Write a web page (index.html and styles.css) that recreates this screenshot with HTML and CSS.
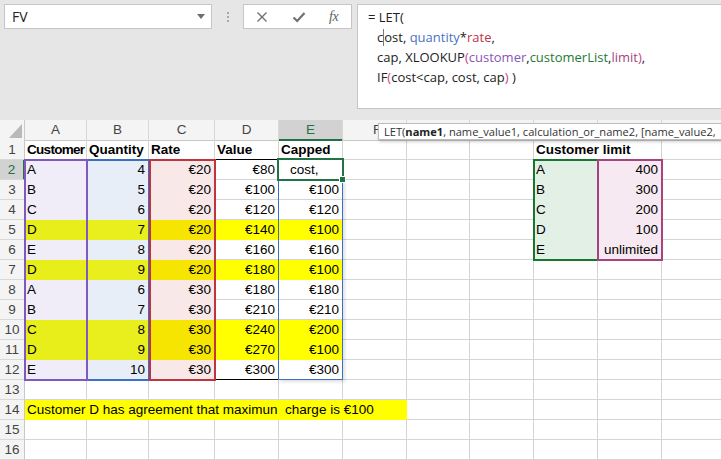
FILE: index.html
```html
<!DOCTYPE html>
<html>
<head>
<meta charset="utf-8">
<link rel="stylesheet" href="styles.css">
</head>
<body>
<div class="topbar">
  <div class="namebox"><span class="nbtext">FV</span><svg class="dd" width="8" height="5" viewBox="0 0 8 5"><polygon points="0,0 8,0 4,5" fill="#6e6e6e"/></svg></div>
  <div class="sep"><i></i><i></i><i></i></div>
  <div class="fbtns">
    <svg width="14" height="14" viewBox="0 0 14 14"><path d="M2.5 2.5 L11.5 11.5 M11.5 2.5 L2.5 11.5" stroke="#707070" stroke-width="1.4" fill="none"/></svg>
    <svg width="14" height="14" viewBox="0 0 14 14"><path d="M1.5 7.5 L5.2 11 L12.5 3" stroke="#707070" stroke-width="2.2" fill="none"/></svg>
    <span class="fx">fx</span>
  </div>
  <div class="fbox">
    <div class="fl">= LET(</div>
    <div class="fl ind">c<span class="caret"></span>ost, <span class="cq">quantity</span>*<span class="cr">rate</span>,</div>
    <div class="fl ind">cap, XLOOKUP<span class="cp">(</span><span class="cc">customer</span>,<span class="cg">customerList</span>,<span class="cl">limit</span><span class="cp">)</span>,</div>
    <div class="fl ind">IF<span class="cp">(</span>cost&lt;cap, cost, cap<span class="cp">)</span> )</div>
  </div>
</div>

<div class="sheet">
  <div class="row">
    <div class="h corner"><svg width="13" height="14" viewBox="0 0 13 14"><polygon points="13,0 13,14 0,14" fill="#b9b9b9"/></svg></div>
    <div class="h">A</div><div class="h">B</div><div class="h">C</div><div class="h">D</div><div class="h sel">E</div><div class="h fcol">F</div><div class="h"></div><div class="h"></div><div class="h"></div><div class="h"></div><div class="h"></div>
  </div>
  <div class="row">
    <div class="rh">1</div>
    <div class="c b tight">Customer</div><div class="c b">Quantity</div><div class="c b">Rate</div><div class="c b">Value</div><div class="c b">Capped</div><div class="c"></div><div class="c"></div><div class="c"></div><div class="c b span2">Customer limit</div><div class="c"></div>
  </div>
  <div class="row">
    <div class="rh rsel">2</div>
    <div class="c fa">A</div><div class="c fb r">4</div><div class="c fc r">€20</div><div class="c r">€80</div><div class="c edit">cost,</div><div class="c"></div><div class="c"></div><div class="c"></div><div class="c fi">A</div><div class="c fj r">400</div><div class="c"></div>
  </div>
  <div class="row">
    <div class="rh">3</div>
    <div class="c fa">B</div><div class="c fb r">5</div><div class="c fc r">€20</div><div class="c r">€100</div><div class="c r">€100</div><div class="c"></div><div class="c"></div><div class="c"></div><div class="c fi">B</div><div class="c fj r">300</div><div class="c"></div>
  </div>
  <div class="row">
    <div class="rh">4</div>
    <div class="c fa">C</div><div class="c fb r">6</div><div class="c fc r">€20</div><div class="c r">€120</div><div class="c r">€120</div><div class="c"></div><div class="c"></div><div class="c"></div><div class="c fi">C</div><div class="c fj r">200</div><div class="c"></div>
  </div>
  <div class="row">
    <div class="rh">5</div>
    <div class="c ya">D</div><div class="c yb r">7</div><div class="c yc r">€20</div><div class="c y r">€140</div><div class="c y r">€100</div><div class="c"></div><div class="c"></div><div class="c"></div><div class="c fi">D</div><div class="c fj r">100</div><div class="c"></div>
  </div>
  <div class="row">
    <div class="rh">6</div>
    <div class="c fa">E</div><div class="c fb r">8</div><div class="c fc r">€20</div><div class="c r">€160</div><div class="c r">€160</div><div class="c"></div><div class="c"></div><div class="c"></div><div class="c fi">E</div><div class="c fj r">unlimited</div><div class="c"></div>
  </div>
  <div class="row">
    <div class="rh">7</div>
    <div class="c ya">D</div><div class="c yb r">9</div><div class="c yc r">€20</div><div class="c y r">€180</div><div class="c y r">€100</div><div class="c"></div><div class="c"></div><div class="c"></div><div class="c"></div><div class="c"></div><div class="c"></div>
  </div>
  <div class="row">
    <div class="rh">8</div>
    <div class="c fa">A</div><div class="c fb r">6</div><div class="c fc r">€30</div><div class="c r">€180</div><div class="c r">€180</div><div class="c"></div><div class="c"></div><div class="c"></div><div class="c"></div><div class="c"></div><div class="c"></div>
  </div>
  <div class="row">
    <div class="rh">9</div>
    <div class="c fa">B</div><div class="c fb r">7</div><div class="c fc r">€30</div><div class="c r">€210</div><div class="c r">€210</div><div class="c"></div><div class="c"></div><div class="c"></div><div class="c"></div><div class="c"></div><div class="c"></div>
  </div>
  <div class="row">
    <div class="rh">10</div>
    <div class="c ya">C</div><div class="c yb r">8</div><div class="c yc r">€30</div><div class="c y r">€240</div><div class="c y r">€200</div><div class="c"></div><div class="c"></div><div class="c"></div><div class="c"></div><div class="c"></div><div class="c"></div>
  </div>
  <div class="row">
    <div class="rh">11</div>
    <div class="c ya">D</div><div class="c yb r">9</div><div class="c yc r">€30</div><div class="c y r">€270</div><div class="c y r">€100</div><div class="c"></div><div class="c"></div><div class="c"></div><div class="c"></div><div class="c"></div><div class="c"></div>
  </div>
  <div class="row">
    <div class="rh">12</div>
    <div class="c fa">E</div><div class="c fb r">10</div><div class="c fc r">€30</div><div class="c r">€300</div><div class="c r">€300</div><div class="c"></div><div class="c"></div><div class="c"></div><div class="c"></div><div class="c"></div><div class="c"></div>
  </div>
  <div class="row">
    <div class="rh">13</div>
    <div class="c"></div><div class="c"></div><div class="c"></div><div class="c"></div><div class="c"></div><div class="c"></div><div class="c"></div><div class="c"></div><div class="c"></div><div class="c"></div><div class="c"></div>
  </div>
  <div class="row">
    <div class="rh">14</div>
    <div class="c y span6">Customer D has agreement that maximun&nbsp; charge is €100</div><div class="c"></div><div class="c"></div><div class="c"></div><div class="c"></div><div class="c"></div>
  </div>
  <div class="row">
    <div class="rh">15</div>
    <div class="c"></div><div class="c"></div><div class="c"></div><div class="c"></div><div class="c"></div><div class="c"></div><div class="c"></div><div class="c"></div><div class="c"></div><div class="c"></div><div class="c"></div>
  </div>
  <div class="row">
    <div class="rh">16</div>
    <div class="c"></div><div class="c"></div><div class="c"></div><div class="c"></div><div class="c"></div><div class="c"></div><div class="c"></div><div class="c"></div><div class="c"></div><div class="c"></div><div class="c"></div>
  </div>

  <!-- range outlines drawn over the cells -->
  <div class="rng rng-d"></div>
  <div class="rng rng-e"></div>
  <div class="rng rng-b"></div>
  <div class="rng rng-a"></div>
  <div class="rng rng-c"></div>
  <div class="rng rng-i"></div>
  <div class="rng rng-j"></div>
  <div class="rng active"></div>

  <div class="tip">LET(<b>name1</b>, name_value1, calculation_or_name2, [name_value2,</div>
</div>
</body>
</html>
```

FILE: styles.css
```css
html, body {
  margin: 0;
  padding: 0;
  width: 721px;
  height: 460px;
  overflow: hidden;
  background: #ffffff;
}

.topbar {
  height: 120px;
  box-sizing: border-box;
  background: #e6e6e6;
  display: flex;
  align-items: flex-start;
  padding: 4px 0 0 4px;
  overflow: hidden;
}

.namebox {
  width: 208px;
  height: 25px;
  box-sizing: border-box;
  border: 1px solid #c6c6c6;
  background: #fff;
  display: flex;
  align-items: center;
  justify-content: space-between;
  padding: 0 6px 0 7px;
  font: 14px "Open Sans", sans-serif;
  color: #222;
}
.nbtext { line-height: 23px; }

.sep {
  width: 31px;
  height: 25px;
  display: flex;
  flex-direction: column;
  align-items: center;
  justify-content: center;
  gap: 2px;
}
.sep i {
  display: block;
  width: 2px;
  height: 2px;
  background: #a8a8a8;
}

.fbtns {
  width: 109px;
  height: 25px;
  box-sizing: border-box;
  border: 1px solid #c6c6c6;
  background: #fff;
  display: flex;
  align-items: center;
  padding-left: 11px;
  gap: 23px;
}
.fx {
  font: italic 14px "Liberation Serif", serif;
  color: #606060;
  width: 14px;
  letter-spacing: -0.5px;
}

.fbox {
  margin-left: 5px;
  flex: 1;
  height: 105px;
  box-sizing: border-box;
  border: 1px solid #c6c6c6;
  border-right: none;
  background: #fff;
  padding: 2px 0 0 10px;
  font: 13px/20px "Open Sans", sans-serif;
  color: #222;
  white-space: nowrap;
}
.fl.ind { padding-left: 9px; }
.caret {
  display: inline-block;
  width: 0;
  height: 17px;
  border-left: 1px solid #777;
  vertical-align: -4px;
}
.cq { color: #4a72c4; }
.cr { color: #c4314b; }
.cc { color: #8a55b8; }
.cg { color: #1f7a33; }
.cl { color: #a8437f; }
.cp { color: #c4458c; }

.sheet {
  --cols: 25px 62px 62px 66px 64px 64px 64px 63px 64px 64px 64px 64px;
  position: relative;
  display: grid;
  grid-template-columns: var(--cols);
  grid-template-rows: repeat(17, 20px);
  font: 13.5px "Liberation Sans", Arial, sans-serif;
}

.row {
  grid-column: 1 / -1;
  display: grid;
  grid-template-columns: var(--cols);
  height: 20px;
}
.row:nth-child(1) { grid-row: 1; }
.row:nth-child(2) { grid-row: 2; }
.row:nth-child(3) { grid-row: 3; }
.row:nth-child(4) { grid-row: 4; }
.row:nth-child(5) { grid-row: 5; }
.row:nth-child(6) { grid-row: 6; }
.row:nth-child(7) { grid-row: 7; }
.row:nth-child(8) { grid-row: 8; }
.row:nth-child(9) { grid-row: 9; }
.row:nth-child(10) { grid-row: 10; }
.row:nth-child(11) { grid-row: 11; }
.row:nth-child(12) { grid-row: 12; }
.row:nth-child(13) { grid-row: 13; }
.row:nth-child(14) { grid-row: 14; }
.row:nth-child(15) { grid-row: 15; }
.row:nth-child(16) { grid-row: 16; }
.row:nth-child(17) { grid-row: 17; }

.h {
  background: #f4f4f4;
  color: #444;
  text-align: center;
  line-height: 19px;
  border-right: 1px solid #d8d8d8;
  border-bottom: 1px solid #c8c8c8;
  box-sizing: border-box;
}
.h.fcol {
  text-align: left;
  padding-left: 30px;
}
.corner {
  display: flex;
  align-items: flex-end;
  justify-content: flex-end;
  padding: 0 2px 2px 0;
  border-right: 1px solid #c8c8c8;
}
.h.sel {
  background: #d2d2d2;
  color: #217346;
  border-bottom: 2px solid #217346;
}

.rh {
  background: #f4f4f4;
  color: #444;
  text-align: center;
  line-height: 19px;
  border-right: 1px solid #c8c8c8;
  border-bottom: 1px solid #d8d8d8;
  box-sizing: border-box;
}
.rh.rsel {
  background: #d2d2d2;
  color: #217346;
  border-right: 2px solid #217346;
}

.c {
  box-sizing: border-box;
  border-right: 1px solid #d4d4d4;
  border-bottom: 1px solid #d4d4d4;
  line-height: 19px;
  padding: 0 3px 0 2px;
  white-space: nowrap;
  overflow: hidden;
  color: #000;
}
.c.r { text-align: right; }
.c.b { font-weight: bold; overflow: visible; }
.c.tight { letter-spacing: -0.7px; padding-right: 0; overflow: hidden; }
.span2 { grid-column: span 2; }
.span6 { grid-column: span 6; }
.c.edit { padding-left: 11px; }

.fa { background: #f0ecf8; border-color: #f0ecf8; }
.fb { background: #e8eef8; border-color: #e8eef8; }
.fc { background: #f9e8e8; border-color: #f9e8e8; }
.fi { background: #e3f0e5; border-color: #e3f0e5; }
.fj { background: #f7e9f1; border-color: #f7e9f1; }
.ya { background: #e8ee1a; border-color: #e8ee1a; }
.yb { background: #e8ef1c; border-color: #e8ef1c; }
.yc { background: #f6e500; border-color: #f6e500; }
.y { background: #ffff00; border-color: #ffff00; }

.rng {
  pointer-events: none;
  box-sizing: border-box;
  margin: -1px;
  border: 2px solid transparent;
}
.rng-a { grid-area: 3 / 2 / 14 / 3; border-color: #7f58c0; }
.rng-b { grid-area: 3 / 3 / 14 / 4; border-color: #3b6fc6; }
.rng-c { grid-area: 3 / 4 / 14 / 5; border-color: #c1333f; margin-left: 0; }
.rng-d {
  grid-area: 3 / 5 / 14 / 6;
  border: none;
  border-top: 1px solid #000;
  border-bottom: 1px solid #000;
  margin: -1px 0 0 0;
}
.rng-e {
  grid-area: 4 / 6 / 14 / 7;
  border: 1px solid #3b6fc6;
  border-top: none;
  margin: 0 0 0 -1px;
  box-shadow: 2px 2px 3px rgba(0, 0, 0, 0.12);
}
.rng-i { grid-area: 3 / 10 / 8 / 11; border-color: #16782e; }
.rng-j { grid-area: 3 / 11 / 8 / 12; border-color: #a8437f; }
.active {
  grid-area: 3 / 6 / 4 / 7;
  border-color: #217346;
  position: relative;
  margin: -2px -1px -1px -2px;
}
.active::after {
  content: "";
  position: absolute;
  right: -4px;
  bottom: -4px;
  width: 5px;
  height: 5px;
  background: #217346;
  border: 1px solid #fff;
}

.tip {
  position: absolute;
  left: 378px;
  top: 3px;
  height: 17px;
  box-sizing: border-box;
  padding: 0 5px;
  background: #fff;
  border: 1px solid #bdbdbd;
  border-right: none;
  box-shadow: 1px 2px 3px rgba(0, 0, 0, 0.18);
  font: 11.1px/15px "Open Sans", sans-serif;
  color: #333;
  white-space: nowrap;
}
.tip b { font-weight: bold; color: #222; }
```
